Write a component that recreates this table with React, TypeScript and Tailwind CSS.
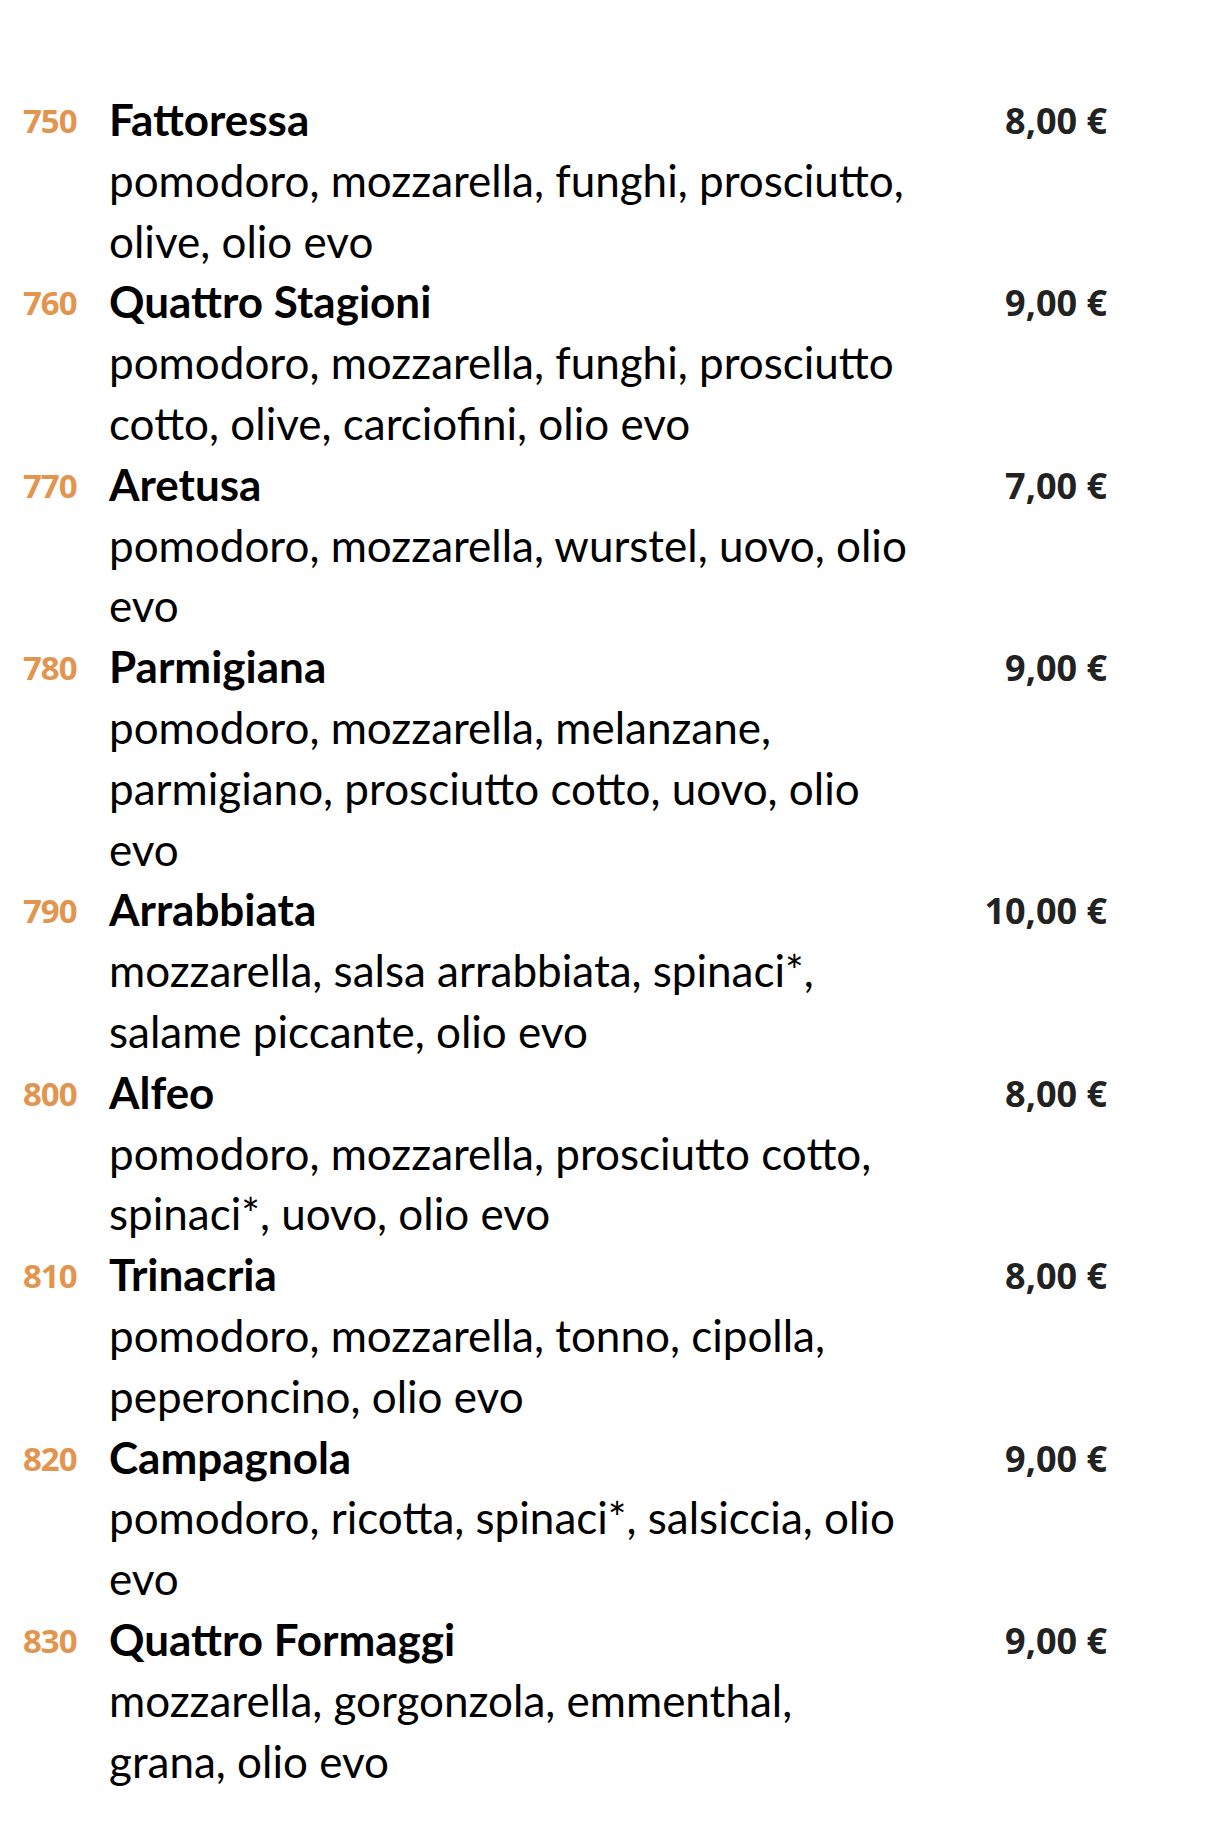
type Pizza = {
  num: string;
  name: string;
  price: string;
  lines: string[];
};

const pizzas: Pizza[] = [
  {
    num: "750",
    name: "Fattoressa",
    price: "8,00 €",
    lines: ["pomodoro, mozzarella, funghi, prosciutto,", "olive, olio evo"],
  },
  {
    num: "760",
    name: "Quattro Stagioni",
    price: "9,00 €",
    lines: ["pomodoro, mozzarella, funghi, prosciutto", "cotto, olive, carciofini, olio evo"],
  },
  {
    num: "770",
    name: "Aretusa",
    price: "7,00 €",
    lines: ["pomodoro, mozzarella, wurstel, uovo, olio", "evo"],
  },
  {
    num: "780",
    name: "Parmigiana",
    price: "9,00 €",
    lines: ["pomodoro, mozzarella, melanzane,", "parmigiano, prosciutto cotto, uovo, olio", "evo"],
  },
  {
    num: "790",
    name: "Arrabbiata",
    price: "10,00 €",
    lines: ["mozzarella, salsa arrabbiata, spinaci*,", "salame piccante, olio evo"],
  },
  {
    num: "800",
    name: "Alfeo",
    price: "8,00 €",
    lines: ["pomodoro, mozzarella, prosciutto cotto,", "spinaci*, uovo, olio evo"],
  },
  {
    num: "810",
    name: "Trinacria",
    price: "8,00 €",
    lines: ["pomodoro, mozzarella, tonno, cipolla,", "peperoncino, olio evo"],
  },
  {
    num: "820",
    name: "Campagnola",
    price: "9,00 €",
    lines: ["pomodoro, ricotta, spinaci*, salsiccia, olio", "evo"],
  },
  {
    num: "830",
    name: "Quattro Formaggi",
    price: "9,00 €",
    lines: ["mozzarella, gorgonzola, emmenthal,", "grana, olio evo"],
  },
];

const MenuItem = ({ item }: { item: Pizza }) => {
  return (
    <div className="flex items-baseline">
      <span className="w-[86px] shrink-0 -translate-y-[3px] font-['Open_Sans',sans-serif] text-[33px] font-bold tracking-[-1px] text-[#e2954f]">
        {item.num}
      </span>
      <div className="flex-1">
        <div className="flex h-[60.8px] items-baseline justify-between">
          <h3 className="font-bold text-black">{item.name}</h3>
          <span className="-translate-y-[2px] font-['Open_Sans',sans-serif] text-[36px] font-bold text-[#222222]">
            {item.price}
          </span>
        </div>
        {item.lines.map((line) => (
          <p key={line} className="text-black">
            {line}
          </p>
        ))}
      </div>
    </div>
  );
};

export default function App() {
  return (
    <main className="min-h-[1839px] bg-white pt-[89px] pr-[105px] pl-[23px] font-['Lato',sans-serif] text-[44px] leading-[60.8px]">
      {pizzas.map((p) => (
        <MenuItem key={p.num} item={p} />
      ))}
    </main>
  );
}
